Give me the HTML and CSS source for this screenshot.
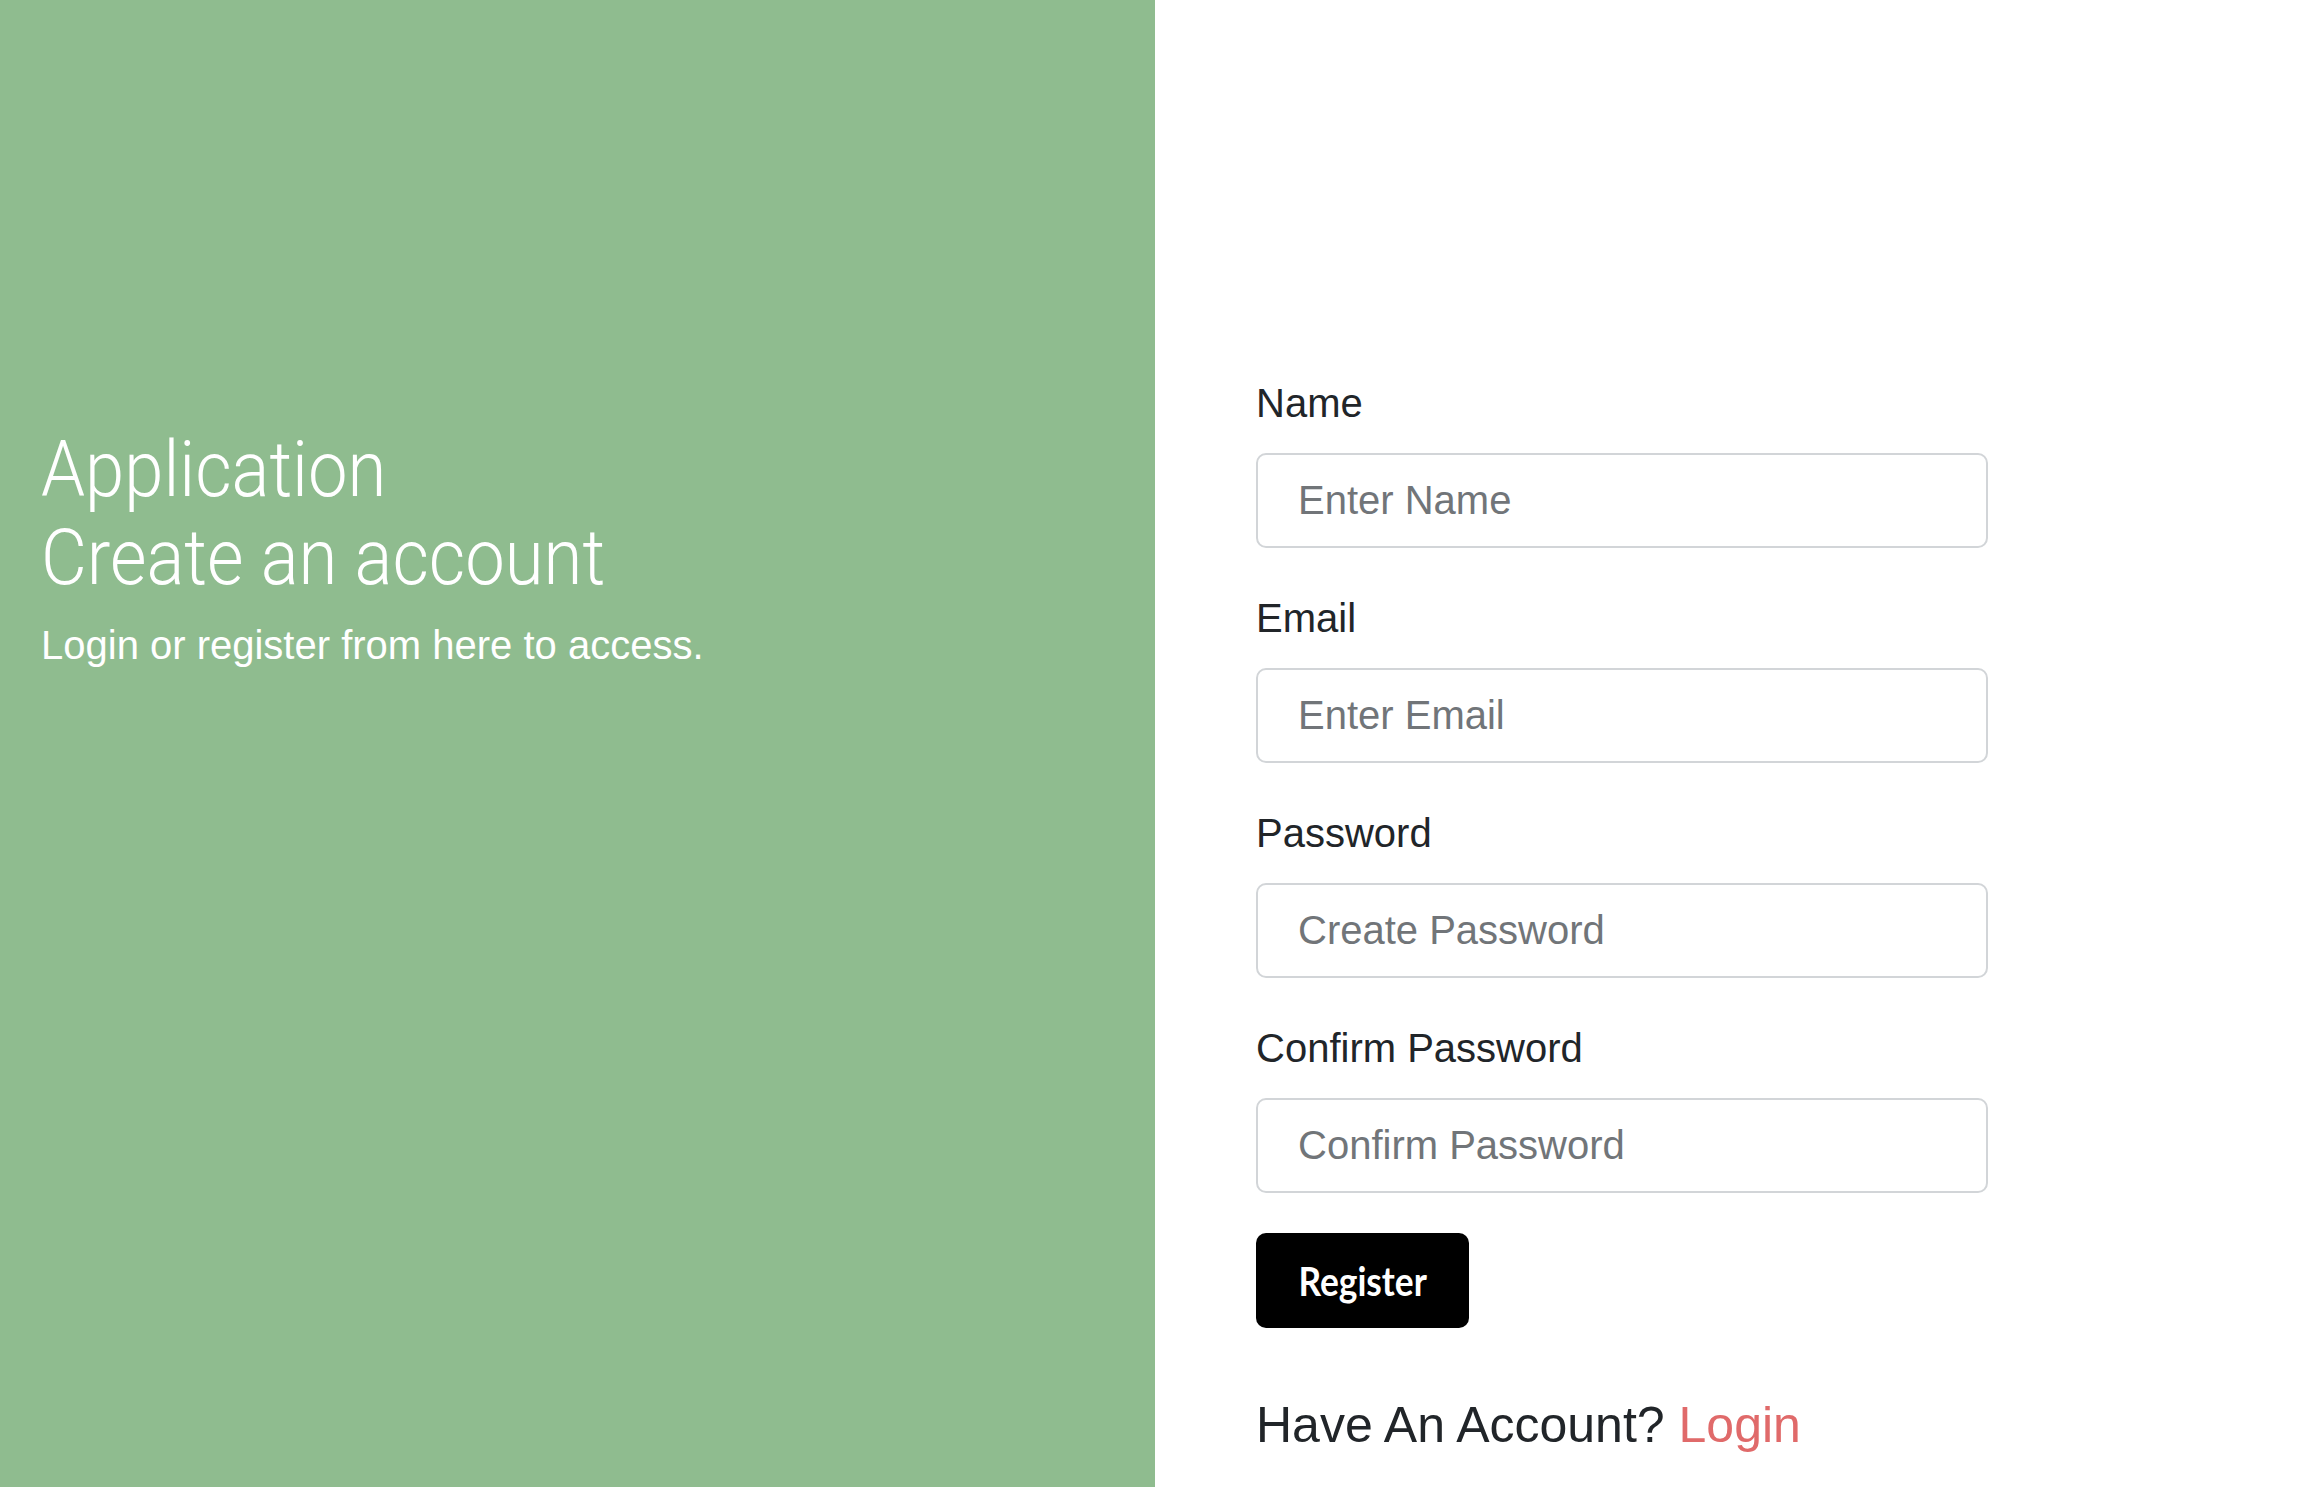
FILE: index.html
```html
<!DOCTYPE html>
<html lang="en">
<head>
<meta charset="utf-8">
<title>Register</title>
<link rel="stylesheet" href="styles.css">
</head>
<body>
<div class="page">
  <aside class="sidenav">
    <div class="main-text">
      <h2 class="title"><span class="title-line">Application</span><span class="title-line">Create an account</span></h2>
      <p class="lead-text">Login or register from here to access.</p>
    </div>
  </aside>
  <main class="main">
    <form class="register-form">
      <div class="form-group">
        <label class="form-label">Name</label>
        <input class="form-control" type="text" placeholder="Enter Name">
      </div>
      <div class="form-group">
        <label class="form-label">Email</label>
        <input class="form-control" type="email" placeholder="Enter Email">
      </div>
      <div class="form-group">
        <label class="form-label">Password</label>
        <input class="form-control" type="password" placeholder="Create Password">
      </div>
      <div class="form-group">
        <label class="form-label">Confirm Password</label>
        <input class="form-control" type="password" placeholder="Confirm Password">
      </div>
      <button class="btn-black" type="button"><span class="btn-label">Register</span></button>
      <h5 class="have-account">Have An Account? <a class="login-link" href="#">Login</a></h5>
    </form>
  </main>
</div>
</body>
</html>
```
FILE: styles.css
```css
html, body {
  margin: 0;
  padding: 0;
  height: 100%;
  overflow: hidden;
}
body {
  font-family: "Liberation Sans", Arial, sans-serif;
  color: #212529;
  background: #fff;
}
.page {
  display: flex;
  height: 100vh;
}
.sidenav {
  width: 1155px;
  flex: none;
  background-color: #8fbc8f;
  color: #fff;
}
.main-text {
  padding: 426px 40px 0 41px;
}
.title {
  margin: 0;
  display: flex;
  flex-direction: column;
  align-items: flex-start;
  font-family: "Roboto", "Liberation Sans", sans-serif;
  font-weight: 300;
  font-size: 78px;
  line-height: 88px;
}
.title-line {
  display: inline-block;
  white-space: nowrap;
  transform: scaleX(0.905);
  transform-origin: left center;
}
.lead-text {
  margin: 13px 0 0 0;
  font-size: 40px;
  line-height: 60px;
}
.main {
  flex: 1;
  padding: 373px 0 0 101px;
}
.register-form {
  display: flex;
  flex-direction: column;
  align-items: flex-start;
}
.form-group {
  display: flex;
  flex-direction: column;
  margin-bottom: 40px;
}
.form-label {
  font-size: 40px;
  line-height: 60px;
  margin-bottom: 20px;
}
.form-control {
  box-sizing: border-box;
  width: 732px;
  height: 95px;
  margin: 0;
  padding: 0 40px;
  border: 2px solid #d2d5d8;
  border-radius: 10px;
  font-family: "Liberation Sans", Arial, sans-serif;
  font-size: 40px;
  color: #495057;
  background: #fff;
  outline: none;
}
.form-control::placeholder {
  color: #717579;
  opacity: 1;
}
.btn-black {
  display: flex;
  align-items: center;
  justify-content: center;
  width: 213px;
  height: 95px;
  padding: 0;
  border: none;
  border-radius: 10px;
  background-color: #000;
  color: #fff;
  font-family: "Lato", "Liberation Sans", sans-serif;
  font-weight: 700;
  font-size: 41px;
  cursor: pointer;
}
.btn-label {
  display: inline-block;
  transform: scaleX(0.86);
  transform-origin: center;
}
.have-account {
  margin: 68px 0 0 0;
  font-size: 50px;
  font-weight: 400;
  line-height: 59px;
  color: #212529;
}
.login-link {
  color: #e06a6a;
  text-decoration: none;
}
```
